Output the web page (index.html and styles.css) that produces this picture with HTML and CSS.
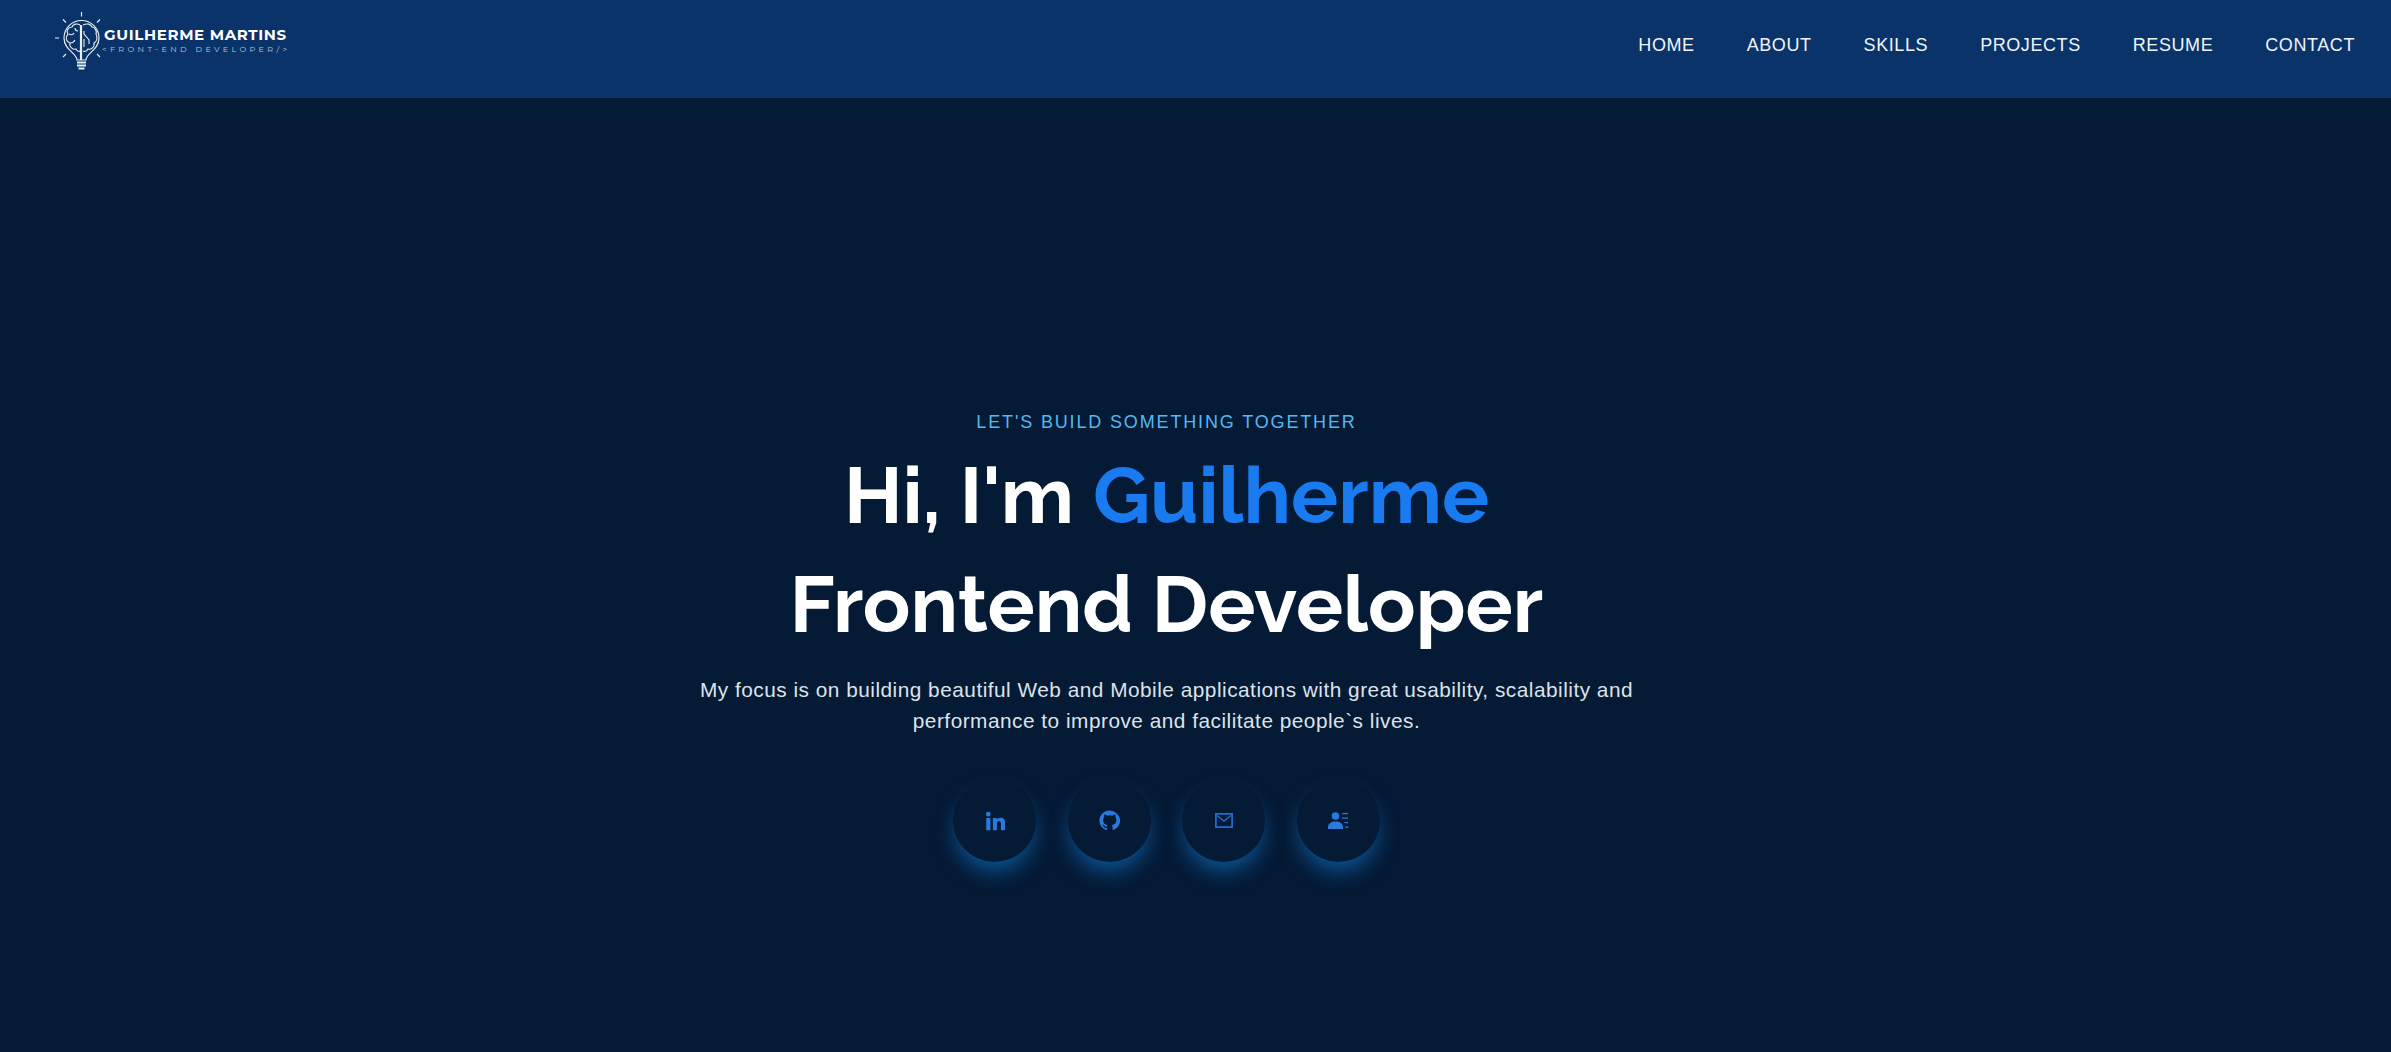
FILE: index.html
```html
<!DOCTYPE html>
<html lang="en">
<head>
<meta charset="utf-8">
<title>Guilherme Martins</title>
<link rel="stylesheet" href="styles.css">
</head>
<body>
<header class="topbar">
  <a class="brand" href="#">
    <svg class="bulb" width="50" height="62" viewBox="0 0 50 62" fill="none" stroke="#e8eef5" stroke-width="1.200">
      <path d="M27.500 2v4.500M1 28h4M9 9.500l3 3M46 9.500l-3 3M9 47l3-3M46 47l-3-3"/>
      <path d="M23 50c0-7-13-10-13-22a17.500 17.500 0 0 1 35 0c0 12-13 15-13 22z"/>
      <path d="M26 15c-3-2-7-1-8 2-4 0-6 4-4 7-3 3-2 8 2 9-1 4 3 7 6 6 1 2 3 3 4 2M15 24c2 1 4 1 5-1M16 33c2 0 4-1 5-3M21 18c0 2 1 3 3 3" stroke-width="1.100"/>
      <path d="M29 15c4-2 8-1 9 2 3 0 5 4 4 7 2 3 1 8-2 9 1 4-3 7-6 6-1 2-3 3-5 2" stroke-width="1.100"/>
      <path d="M27 15v35" stroke-width="2.200"/>
      <path d="M30 21v3l5 6v4M30 29v8" stroke-width="1.100"/>
      <path d="M23 52.500h9M23 55.500h9M24.500 58.500h6" stroke-width="2"/>
    </svg>
    <span class="brand-text">
      <span class="brand-name">GUILHERME MARTINS</span>
      <span class="brand-role">&lt;FRONT-END DEVELOPER/&gt;</span>
    </span>
  </a>
  <nav class="nav">
    <a href="#">HOME</a>
    <a href="#">ABOUT</a>
    <a href="#">SKILLS</a>
    <a href="#">PROJECTS</a>
    <a href="#">RESUME</a>
    <a href="#">CONTACT</a>
  </nav>
</header>
<main class="hero">
  <p class="eyebrow">LET'S BUILD SOMETHING TOGETHER</p>
  <h1 class="title">Hi, I'm <span class="accent">Guilherme</span></h1>
  <h1 class="title">Frontend Developer</h1>
  <p class="lead">My focus is on building beautiful Web and Mobile applications with great usability, scalability and performance to improve and facilitate people`s lives.</p>
  <div class="socials">
    <a class="social" href="#" aria-label="LinkedIn">
      <svg width="20" height="20" viewBox="0 0 24 24" fill="#2a7ade"><path d="M1.500 8.500h5V23h-5zM4 1a2.800 2.800 0 1 1 0 5.600A2.800 2.800 0 0 1 4 1zM9.500 8.500h4.700v2c.7-1.300 2.400-2.400 4.500-2.400 4.300 0 5.300 2.800 5.300 6.600V23h-4.900v-7.400c0-1.700-.3-3.300-2.300-3.300s-2.500 1.600-2.500 3.300V23H9.500z"/></svg>
    </a>
    <a class="social" href="#" aria-label="GitHub">
      <svg width="21" height="21" viewBox="0 0 24 24" fill="#2a7ade"><path d="M12 .5C5.650.5.500 5.650.500 12c0 5.100 3.300 9.400 7.900 10.900.6.100.8-.25.8-.55v-2.100c-3.200.7-3.900-1.400-3.900-1.400-.5-1.350-1.300-1.700-1.300-1.700-1.050-.7.100-.7.100-.7 1.150.1 1.800 1.200 1.800 1.200 1 1.800 2.700 1.300 3.350 1 .1-.75.400-1.300.75-1.600-2.550-.3-5.250-1.300-5.250-5.700 0-1.250.45-2.300 1.200-3.100-.15-.3-.5-1.450.1-3 0 0 1-.3 3.300 1.200a11.500 11.500 0 0 1 6 0c2.300-1.500 3.300-1.200 3.300-1.200.6 1.550.25 2.700.1 3 .75.800 1.200 1.850 1.200 3.100 0 4.400-2.700 5.400-5.250 5.700.4.350.8 1.050.8 2.100v3.150c0 .3.200.65.800.55 4.600-1.500 7.900-5.800 7.900-10.900C23.500 5.650 18.350.5 12 .5z"/></svg>
    </a>
    <a class="social" href="#" aria-label="Email">
      <svg width="18" height="15" viewBox="0 0 18 15" fill="none" stroke="#1f6cc8" stroke-width="1.800"><rect x=".9" y=".9" width="16.200" height="13.200"/><path d="M2 2.500L9 8l7-5.500" stroke-width="1.500"/></svg>
    </a>
    <a class="social" href="#" aria-label="Resume">
      <svg width="21" height="17" viewBox="0 0 21 17" fill="#2a7ade"><circle cx="7.500" cy="4" r="3.800"/><path d="M0 17v-2c0-3.500 3.500-5.500 7.500-5.500s7.500 2 7.500 5.500v2c0 .3-15 .3-15 0z"/><path d="M14 1h6v1.300h-6zM14 5.500h6v1.300h-6zM16.500 10h3.500v1.300h-3.500zM17 14.500h3.500v1.300H17z"/></svg>
    </a>
  </div>
</main>
</body>
</html>
```
FILE: styles.css
```css
* { box-sizing: border-box; }
html, body { margin: 0; height: 100%; }
body {
  background: #051a35;
  font-family: "Liberation Sans", Arial, sans-serif;
  color: #fff;
  overflow: hidden;
}
a { color: inherit; text-decoration: none; }
.topbar {
  height: 98px;
  background: #0a3369;
  display: flex;
  justify-content: space-between;
  padding: 10px 36px 0 54px;
}
.brand { display: flex; align-items: flex-start; align-self: flex-start; }
.bulb { display: block; }
.brand-text { display: flex; flex-direction: column; padding-top: 16px; }
.brand-name {
  font-family: Montserrat, "Open Sans", sans-serif;
  font-weight: 700;
  font-size: 15px;
  line-height: 18px;
  letter-spacing: .65px;
  color: #fff;
}
.brand-role {
  font-family: Montserrat, "Open Sans", sans-serif;
  font-size: 8px;
  line-height: 11px;
  margin-left: -2px;
  letter-spacing: 3.350px;
  color: #b9c6d8;
}
.nav { display: flex; gap: 52px; padding-top: 25px; align-self: flex-start; }
.nav a { font-size: 18px; line-height: 20px; color: #f0f4f8; letter-spacing: .58px; }
.hero {
  display: flex;
  flex-direction: column;
  align-items: center;
  padding: 313px 58px 0 0;
  text-align: center;
}
.eyebrow {
  margin: 0;
  font-size: 18px;
  line-height: 22px;
  letter-spacing: 1.850px;
  color: #55b8f2;
}
.title {
  margin: 0;
  font-family: Raleway, Inter, "Open Sans", sans-serif;
  font-weight: 700;
  font-size: 78.700px;
  line-height: 109px;
  color: #fff;
}
.eyebrow + .title { margin-top: 8px; }
.accent { color: #1a7af0; }
.lead {
  margin: 15px 0 0;
  width: 960px;
  font-size: 20.800px;
  line-height: 31px;
  letter-spacing: .5px;
  color: #dde3ea;
}
.socials { display: flex; gap: 31.500px; margin-top: 43px; }
.social {
  width: 83px;
  height: 83px;
  border-radius: 50%;
  background: #051a35;
  display: flex;
  align-items: center;
  justify-content: center;
  box-shadow: 0 12px 22px -4px rgba(15, 125, 215, .65);
}
```
